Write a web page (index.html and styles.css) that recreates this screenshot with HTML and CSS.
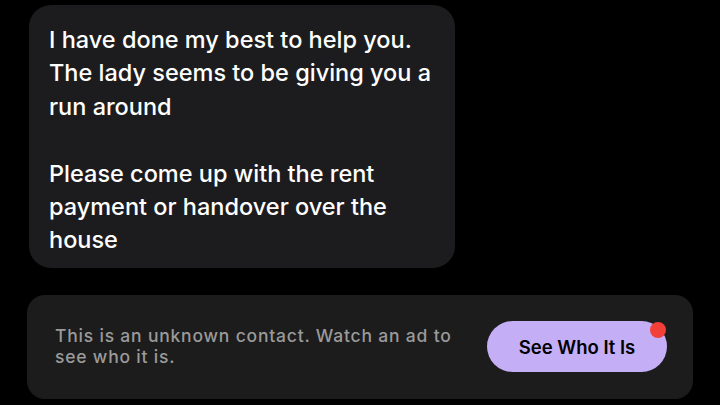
FILE: index.html
```html
<!DOCTYPE html>
<html lang="en">
<head>
  <meta charset="UTF-8" />
  <meta name="viewport" content="width=device-width, initial-scale=1.0"/>
  <title>Message</title>
  <link rel="stylesheet" href="styles.css">
</head>
<body>

<div class="thread">
  <!-- incoming message -->
  <div class="bubble">
    <p>I have done my best to help you. The lady seems to be giving you a run around</p>
    <p>Please come up with the rent payment or handover over the house</p>
  </div>

  <!-- unknown contact bar -->
  <div class="unknown-bar">
    <p class="unknown-text">This is an unknown contact. Watch an ad to see who it is.</p>
    <button class="reveal-btn">
      See Who It Is
      <span class="dot"></span>
    </button>
  </div>
</div>

</body>
</html>
```

FILE: styles.css
```css
html, body {
  margin: 0;
  padding: 0;
  background: #000;
  font-family: "Inter", "Noto Sans", sans-serif;
}
.thread {
  display: flex;
  flex-direction: column;
  gap: 27px;
  padding: 5px 27px 0 27px;
}
.bubble {
  margin-left: 2px;
  width: 386px;
  padding: 18px 20px 11px 20px;
  background: #1c1c1e;
  border-radius: 22px;
  color: #fff;
  font-size: 23.5px;
  line-height: 33.4px;
  font-weight: 500;
}
.bubble p {
  margin: 0;
}
.bubble p + p {
  margin-top: 33.4px;
}
.unknown-bar {
  display: flex;
  align-items: center;
  justify-content: space-between;
  height: 104px;
  box-sizing: border-box;
  padding: 0 26px 0 28px;
  background: #1c1c1c;
  border-radius: 18px;
}
.unknown-text {
  margin: 0;
  width: 405px;
  color: #9a9a9a;
  font-family: "Inter", "Noto Sans", sans-serif;
  font-size: 17.5px;
  font-weight: 500;
  letter-spacing: 0.8px;
  line-height: 20.5px;
}
.reveal-btn {
  position: relative;
  width: 180px;
  height: 51px;
  border: none;
  border-radius: 26px;
  background: #c4aef6;
  color: #000;
  font-family: "Inter", "Noto Sans", sans-serif;
  font-size: 18.5px;
  font-weight: 600;
  cursor: pointer;
}
.dot {
  position: absolute;
  top: 1px;
  left: 163px;
  width: 16px;
  height: 16px;
  border-radius: 50%;
  background: #f23f37;
}
```
